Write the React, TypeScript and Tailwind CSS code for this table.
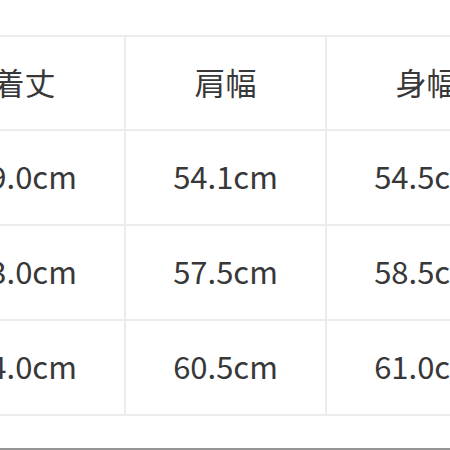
import React from "react";

const rows = [
  ["着丈", "肩幅", "身幅"],
  ["69.0cm", "54.1cm", "54.5cm"],
  ["73.0cm", "57.5cm", "58.5cm"],
  ["74.0cm", "60.5cm", "61.0cm"],
];

export default function App() {
  return (
    <div
      className="w-[450px] h-[450px] overflow-hidden bg-white flex flex-col text-[#383838]"
      style={{ fontFamily: '"Noto Sans CJK JP", "Noto Sans", sans-serif' }}
    >
      <div className="h-[35px] shrink-0" />
      <div className="ml-[-77px] w-max border-t-2 border-l-2 border-[#ececec] shrink-0">
        {rows.map((r, i) => (
          <div key={i} className="flex">
            {r.map((c, j) => (
              <div
                key={j}
                className={`w-[201px] shrink-0 border-r-2 border-b-2 border-[#ececec] flex items-center justify-center pb-[4px] text-[31px] leading-none ${
                  i === 0 ? "h-[94px]" : "h-[95px]"
                }`}
              >
                {c}
              </div>
            ))}
          </div>
        ))}
      </div>
      <div className="flex-1" />
      <div className="h-[2px] bg-[#959595] shrink-0" />
    </div>
  );
}
